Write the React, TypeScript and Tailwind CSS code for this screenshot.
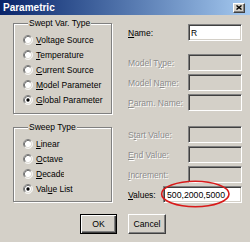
import React from "react";

function Radio({ label, checked }: { label: React.ReactNode; checked?: boolean }) {
  return (
    <div className="flex h-[15px] items-center gap-[3px]">
      <svg width="10" height="10" viewBox="0 0 12 12" className="shrink-0">
        <circle cx="6" cy="6" r="5" fill="#fff" />
        <path d="M2.11 9.89 A5.5 5.5 0 0 1 9.89 2.11" fill="none" stroke="#808080" strokeWidth="1" />
        <path d="M2.82 9.18 A4.5 4.5 0 0 1 9.18 2.82" fill="none" stroke="#404040" strokeWidth="1" />
        <path d="M9.89 2.11 A5.5 5.5 0 0 1 2.11 9.89" fill="none" stroke="#ffffff" strokeWidth="1" />
        <path d="M9.18 2.82 A4.5 4.5 0 0 1 2.82 9.18" fill="none" stroke="#d4d0c8" strokeWidth="1" />
        {checked && <circle cx="6" cy="6" r="2" fill="#000" />}
      </svg>
      <span className="whitespace-nowrap">{label}</span>
    </div>
  );
}

function Field({ label, disabled, value }: { label: React.ReactNode; disabled?: boolean; value?: string }) {
  return (
    <div className="flex h-[17px] items-center">
      <span
        className={
          disabled
            ? "flex-1 whitespace-nowrap text-[#8c8c8c] [text-shadow:1px_1px_0_#ffffff]"
            : "flex-1 whitespace-nowrap text-black"
        }
      >
        {label}
      </span>
      <div
        className={
          disabled
            ? "w-[54px] h-[17px] bg-[#d4d0c8] border border-t-[#808080] border-l-[#808080] border-b-white border-r-white shadow-[inset_1px_1px_0_#404040,inset_-1px_-1px_0_#d4d0c8]"
            : "w-[54px] h-[17px] bg-white border border-t-[#808080] border-l-[#808080] border-b-white border-r-white shadow-[inset_1px_1px_0_#404040,inset_-1px_-1px_0_#d4d0c8] pl-[2px] flex items-center"
        }
      >
        {value}
      </div>
    </div>
  );
}

export default function App() {
  return (
    <div className="w-[250px] h-[242px] overflow-hidden bg-[#d4d0c8] font-['Liberation_Sans',Arial,sans-serif] text-[8.5px] leading-[10px] text-black flex flex-col">
      {/* Title bar */}
      <div className="h-[15px] shrink-0 flex items-center justify-between bg-linear-to-r from-[#0a246a] to-[#a6caf0] pl-[3px] pr-[5px]">
        <span className="text-white font-bold text-[10px] leading-[12px]">Parametric</span>
        <div className="w-[12px] h-[10px] bg-[#d4d0c8] border border-t-white border-l-white border-b-[#404040] border-r-[#404040] shadow-[inset_-1px_-1px_0_#808080] flex items-center justify-center">
          <svg width="6" height="5" viewBox="0 0 6 5">
            <path d="M0.5 0.5 L5.5 4.5 M5.5 0.5 L0.5 4.5" stroke="#000" strokeWidth="1.4" />
          </svg>
        </div>
      </div>

      {/* Body */}
      <div className="flex pl-[13px] pr-[8px]">
        {/* Left column */}
        <div className="w-[99px] shrink-0 flex flex-col pt-[3px] gap-[8px]">
          <fieldset className="h-[96px] w-[99px] border border-[#808080] shadow-[inset_1px_1px_0_#ffffff,1px_1px_0_#ffffff] pt-[4px] pl-[9px]">
            <legend className="ml-[5px] px-[1px] leading-[10px] bg-[#d4d0c8]">Swept Var. Type</legend>
            <Radio label={<><u>V</u>oltage Source</>} />
            <Radio label={<><u>T</u>emperature</>} />
            <Radio label={<><u>C</u>urrent Source</>} />
            <Radio label={<><u>M</u>odel Parameter</>} />
            <Radio label={<><u>G</u>lobal Parameter</>} checked />
          </fieldset>
          <fieldset className="h-[80px] w-[99px] border border-[#808080] shadow-[inset_1px_1px_0_#ffffff,1px_1px_0_#ffffff] pt-[4px] pl-[9px]">
            <legend className="ml-[5px] px-[1px] leading-[10px] bg-[#d4d0c8]">Sweep Type</legend>
            <Radio label={<><u>L</u>inear</>} />
            <Radio label={<><u>O</u>ctave</>} />
            <Radio label={<span className="inline-block w-[28px] overflow-hidden align-top"><u>D</u>ecade</span>} />
            <Radio label={<>Val<u>u</u>e List</>} checked />
          </fieldset>
        </div>

        {/* Right column */}
        <div className="ml-[16px] w-[114px] flex flex-col pt-[9px]">
          <Field label={<><u>N</u>ame:</>} value="R" />
          <div className="mt-[13px] flex flex-col gap-[3px]">
            <Field label={<>Model T<u>y</u>pe:</>} disabled />
            <Field label={<>Model N<u>a</u>me:</>} disabled />
            <Field label={<><u>P</u>aram. Name:</>} disabled />
          </div>
          <div className="mt-[15px] flex flex-col gap-[3px]">
            <Field label={<>S<u>t</u>art Value:</>} disabled />
            <Field label={<><u>E</u>nd Value:</>} disabled />
            <Field label={<><u>I</u>ncrement:</>} disabled />
            <div className="relative flex h-[17px] items-center">
              <span className="flex-1 whitespace-nowrap"><u>V</u>alues:</span>
              <div className="w-[79px] h-[17px] bg-white border border-t-[#808080] border-l-[#808080] border-b-white border-r-white shadow-[inset_1px_1px_0_#404040,inset_-1px_-1px_0_#d4d0c8] pl-[3px] flex items-center text-[8.7px]">
                500,2000,5000
              </div>
              <svg
                className="absolute left-[32px] top-[-6px] overflow-visible"
                width="71"
                height="28"
                viewBox="0 0 71 28"
              >
                <ellipse cx="35.3" cy="14" rx="33.7" ry="12.8" fill="none" stroke="#d81a1a" strokeWidth="1.6" />
              </svg>
            </div>
          </div>
        </div>
      </div>

      {/* Buttons */}
      <div className="flex pl-[80px] gap-[11px] mt-[11px]">
        <button className="w-[37px] h-[20px] bg-[#d4d0c8] border border-black shadow-[inset_1px_1px_0_#ffffff,inset_-1px_-1px_0_#404040,inset_-2px_-2px_0_#808080] flex items-center justify-center text-[8.7px] leading-[10px]">
          OK
        </button>
        <button className="w-[38px] h-[20px] bg-[#d4d0c8] border border-t-white border-l-white border-b-[#404040] border-r-[#404040] shadow-[inset_-1px_-1px_0_#808080] flex items-center justify-center text-[8.7px] leading-[10px]">
          Cancel
        </button>
      </div>
    </div>
  );
}
